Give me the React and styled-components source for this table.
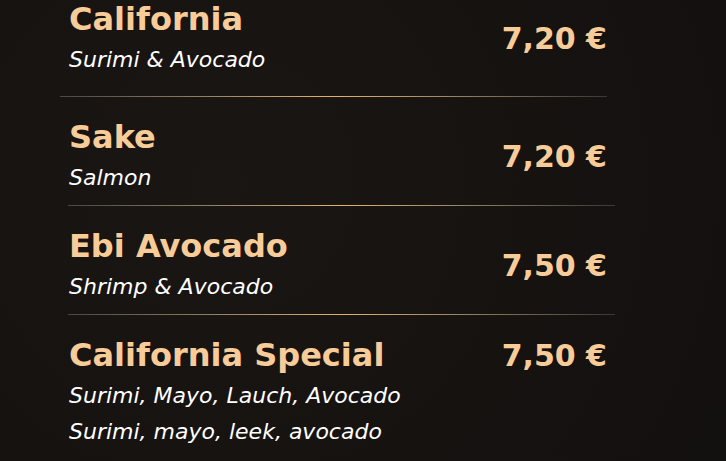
import React from "react"
import styled, { createGlobalStyle } from "styled-components"

const Global = createGlobalStyle`
  html, body {
    margin: 0;
    padding: 0;
    background: #151210;
    overflow: hidden;
  }
  body {
    font-family: "DejaVu Sans", "Liberation Sans", sans-serif;
  }
`

const Page = styled.div`
  width: 726px;
  height: 461px;
  overflow: hidden;
  background: radial-gradient(circle at 30% 40%, #191614 0%, #151210 60%, #131110 100%);
`

// the menu list is scrolled a little, so the first row is cut at the top
const List = styled.div`
  width: 547px;
  margin: -21px 0 0 68px;
  display: flex;
  flex-direction: column;
`

const Row = styled.div`
  position: relative;
  display: flex;
  justify-content: space-between;
  align-items: ${(p) => (p.$top ? "baseline" : "center")};
  padding: 21px 8px ${(p) => (p.$first ? 19 : 10)}px 1px;

  &::after {
    content: "";
    display: ${(p) => (p.$last ? "none" : "block")};
    position: absolute;
    left: ${(p) => p.$shift || 0}px;
    right: ${(p) => -(p.$shift || 0)}px;
    bottom: 0;
    height: 1px;
    background: linear-gradient(
      90deg,
      rgba(120, 112, 104, 0.55) 0%,
      rgba(190, 165, 125, 0.8) 30%,
      #e6b069 50%,
      rgba(190, 165, 125, 0.8) 70%,
      rgba(85, 80, 76, 0.6) 100%
    );
  }
`

const Info = styled.div`
  display: flex;
  flex-direction: column;
`

const Name = styled.h3`
  margin: 0 0 3px;
  font-size: 32px;
  line-height: 39px;
  font-weight: 700;
  color: #f8cc98;
`

const Desc = styled.p`
  margin: 0;
  font-size: 22px;
  line-height: 36px;
  font-style: italic;
  font-weight: 400;
  color: #ffffff;
`

const Price = styled.span`
  font-size: 30px;
  line-height: 36px;
  font-weight: 700;
  color: #f8cc98;
  white-space: nowrap;
`

const items = [
  { name: "California", desc: ["Surimi & Avocado"], price: "7,20 €", shift: -8 },
  { name: "Sake", desc: ["Salmon"], price: "7,20 €" },
  { name: "Ebi Avocado", desc: ["Shrimp & Avocado"], price: "7,50 €" },
  {
    name: "California Special",
    desc: ["Surimi, Mayo, Lauch, Avocado", "Surimi, mayo, leek, avocado"],
    price: "7,50 €",
    top: true,
  },
]

export default function App() {
  return (
    <Page>
      <Global />
      <List>
        {items.map((it, i) => (
          <Row
            key={it.name}
            $top={it.top}
            $shift={it.shift}
            $first={i === 0}
            $last={i === items.length - 1}
          >
            <Info>
              <Name>{it.name}</Name>
              {it.desc.map((d) => (
                <Desc key={d}>{d}</Desc>
              ))}
            </Info>
            <Price>{it.price}</Price>
          </Row>
        ))}
      </List>
    </Page>
  )
}
